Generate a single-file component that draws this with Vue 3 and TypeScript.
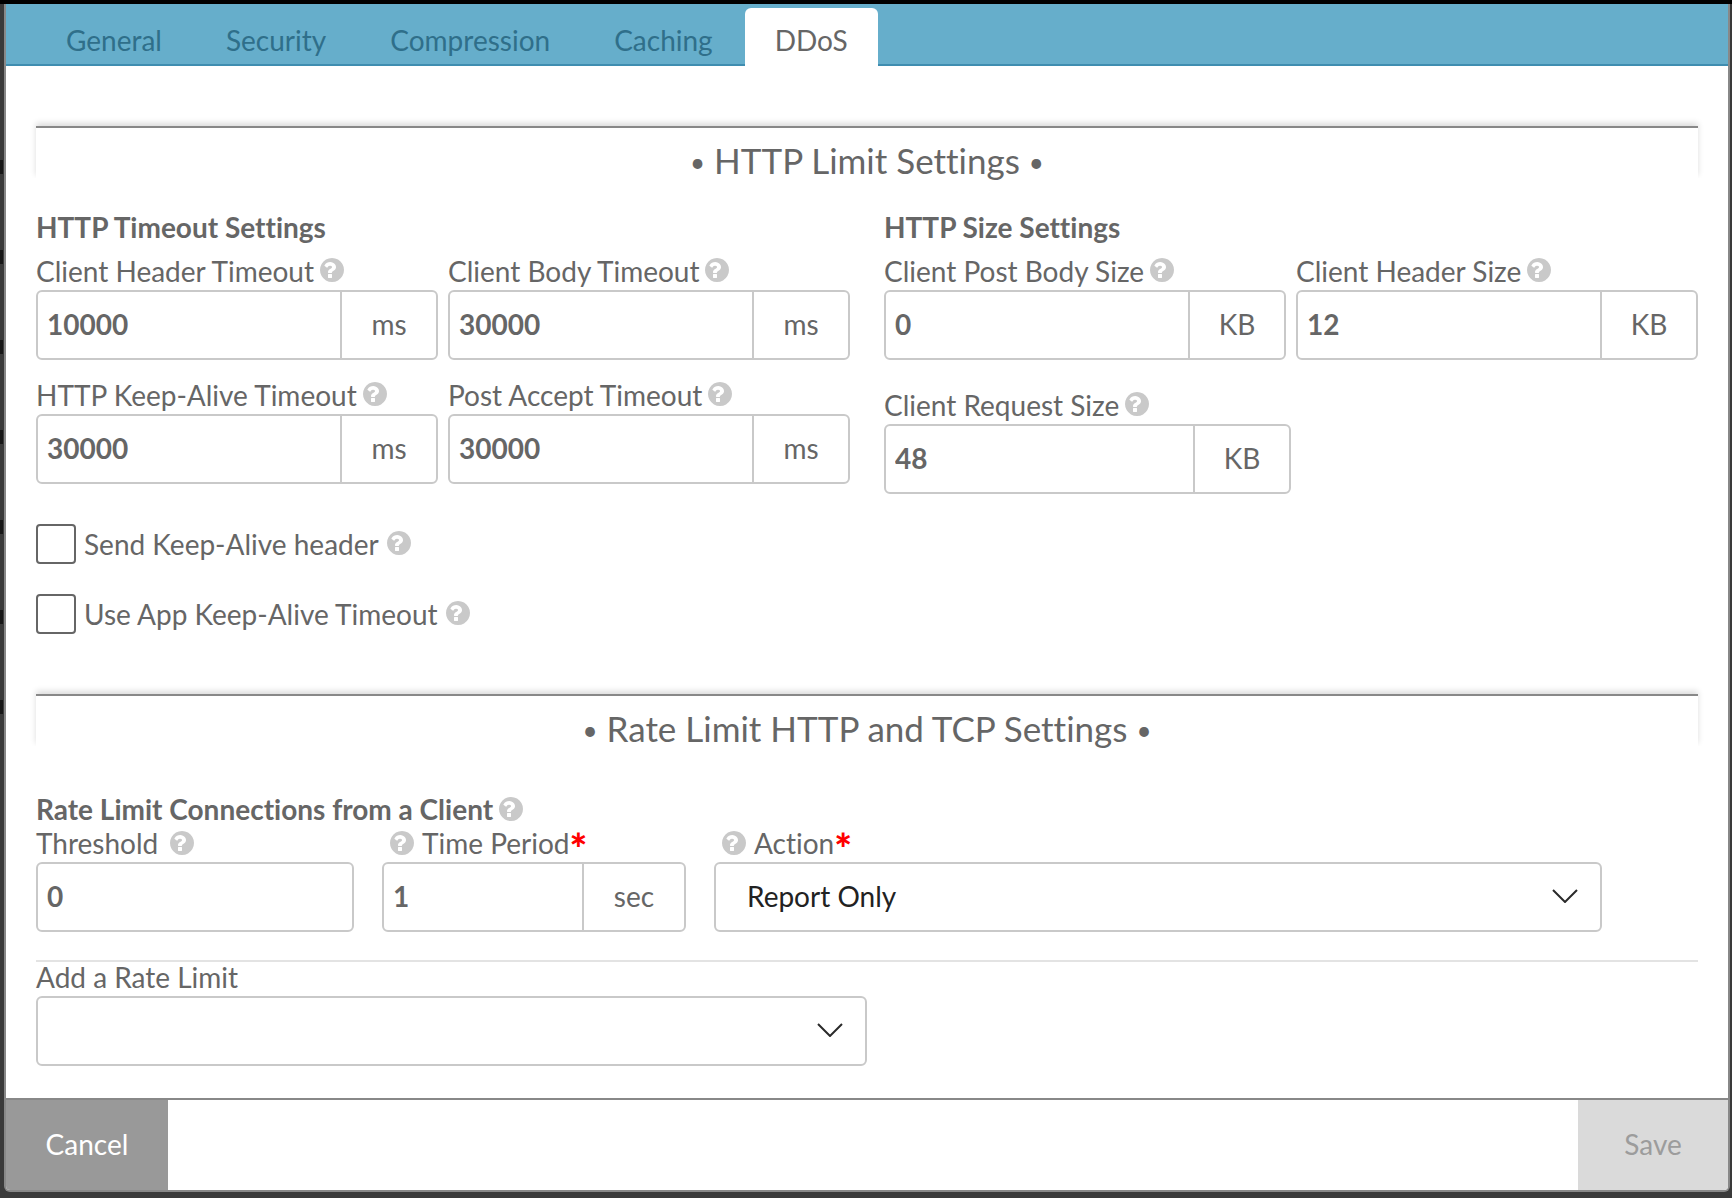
<script setup lang="ts">
import { reactive, ref } from 'vue'

interface Field {
  id: string
  label: string
  unit: string
}

const tabs: string[] = ['General', 'Security', 'Compression', 'Caching', 'DDoS']
const activeTab = ref('DDoS')

const timeoutFields: Field[] = [
  { id: 'client-header-timeout', label: 'Client Header Timeout', unit: 'ms' },
  { id: 'client-body-timeout', label: 'Client Body Timeout', unit: 'ms' },
  { id: 'keep-alive-timeout', label: 'HTTP Keep-Alive Timeout', unit: 'ms' },
  { id: 'post-accept-timeout', label: 'Post Accept Timeout', unit: 'ms' },
]

const sizeFields: Field[] = [
  { id: 'post-body-size', label: 'Client Post Body Size', unit: 'KB' },
  { id: 'client-header-size', label: 'Client Header Size', unit: 'KB' },
]

const values = reactive<Record<string, string>>({
  'client-header-timeout': '10000',
  'client-body-timeout': '30000',
  'keep-alive-timeout': '30000',
  'post-accept-timeout': '30000',
  'post-body-size': '0',
  'client-header-size': '12',
  'client-request-size': '48',
  threshold: '0',
  period: '1',
})

const sendHeader = ref(false)
const useAppTimeout = ref(false)
const action = ref('Report Only')
const newLimit = ref('')
</script>

<template>
  <svg class="sprite" width="0" height="0" aria-hidden="true">
    <symbol id="help" viewBox="128 128 1536 1536">
      <path
        d="M896 1376v-192q0-14-9-23t-23-9h-192q-14 0-23 9t-9 23v192q0 14 9 23t23 9h192q14 0 23-9t9-23zm256-672q0-88-55.5-163t-138.5-116-170-41q-243 0-371 213-15 24 8 42l132 100q7 6 19 6 16 0 25-12 53-68 86-92 34-24 86-24 48 0 85.5 26t37.5 59q0 38-20 61t-68 45q-63 28-115.5 86.5t-52.5 125.5v36q0 14 9 23t23 9h192q14 0 23-9t9-23q0-19 21.5-49.5t54.5-49.5q32-18 49-28.5t46-35 44.5-48 28-60.5 12.5-81zm512 192q0 209-103 385.5t-279.5 279.5-385.5 103-385.5-103-279.5-279.5-103-385.5 103-385.5 279.5-279.5 385.5-103 385.5 103 279.5 279.5 103 385.5z"
      />
    </symbol>
    <symbol id="chevron" viewBox="0 0 26 14">
      <path d="M1 1 13 13 25 1" fill="none" stroke="#2a2a2a" stroke-width="2" />
    </symbol>
  </svg>

  <div class="backdrop">
    <form class="modal" @submit.prevent>
      <nav class="tabs">
        <button
          v-for="tab in tabs"
          :key="tab"
          type="button"
          class="tab"
          :class="{ active: tab === activeTab }"
          @click="activeTab = tab"
        >
          {{ tab }}
        </button>
      </nav>

      <main class="body">
        <section class="limits">
          <h2 class="title">
            <span class="dot">•</span> HTTP Limit Settings <span class="dot">•</span>
          </h2>
          <div class="columns">
            <div>
              <h3 class="heading">HTTP Timeout Settings</h3>
              <div class="pairs">
                <div v-for="f in timeoutFields" :key="f.id">
                  <div class="label-row">
                    <label :for="f.id">{{ f.label }}</label>
                    <button type="button" class="help" :aria-label="'Help: ' + f.label">
                      <svg><use href="#help" /></svg>
                    </button>
                  </div>
                  <div class="box">
                    <input :id="f.id" v-model="values[f.id]" type="text" />
                    <span class="unit">{{ f.unit }}</span>
                  </div>
                </div>
              </div>
            </div>
            <div>
              <h3 class="heading">HTTP Size Settings</h3>
              <div class="pairs">
                <div v-for="f in sizeFields" :key="f.id">
                  <div class="label-row">
                    <label :for="f.id">{{ f.label }}</label>
                    <button type="button" class="help" :aria-label="'Help: ' + f.label">
                      <svg><use href="#help" /></svg>
                    </button>
                  </div>
                  <div class="box">
                    <input :id="f.id" v-model="values[f.id]" type="text" />
                    <span class="unit">{{ f.unit }}</span>
                  </div>
                </div>
              </div>
              <div class="half">
                <div class="label-row">
                  <label for="client-request-size">Client Request Size</label>
                  <button type="button" class="help" aria-label="Help: Client Request Size">
                    <svg><use href="#help" /></svg>
                  </button>
                </div>
                <div class="box">
                  <input id="client-request-size" v-model="values['client-request-size']" type="text" />
                  <span class="unit">KB</span>
                </div>
              </div>
            </div>
          </div>

          <div class="checks">
            <div class="check">
              <input id="send-header" v-model="sendHeader" type="checkbox" />
              <label for="send-header">Send Keep-Alive header</label>
              <button type="button" class="help" aria-label="Help: Send Keep-Alive header">
                <svg><use href="#help" /></svg>
              </button>
            </div>
            <div class="check">
              <input id="use-app-timeout" v-model="useAppTimeout" type="checkbox" />
              <label for="use-app-timeout">Use App Keep-Alive Timeout</label>
              <button type="button" class="help" aria-label="Help: Use App Keep-Alive Timeout">
                <svg><use href="#help" /></svg>
              </button>
            </div>
          </div>
        </section>

        <section class="rates">
          <h2 class="title">
            <span class="dot">•</span> Rate Limit HTTP and TCP Settings <span class="dot">•</span>
          </h2>
          <div class="rate-heading">
            <h3>Rate Limit Connections from a Client</h3>
            <button type="button" class="help" aria-label="Help: Rate Limit Connections">
              <svg><use href="#help" /></svg>
            </button>
          </div>
          <div class="rate-row">
            <div>
              <div class="label-row spaced">
                <label for="threshold">Threshold</label>
                <button type="button" class="help" aria-label="Help: Threshold">
                  <svg><use href="#help" /></svg>
                </button>
              </div>
              <div class="box">
                <input id="threshold" v-model="values.threshold" type="text" />
              </div>
            </div>
            <div>
              <div class="label-row leading">
                <button type="button" class="help" aria-label="Help: Time Period">
                  <svg><use href="#help" /></svg>
                </button>
                <label for="period">Time Period<span class="required">*</span></label>
              </div>
              <div class="box">
                <input id="period" v-model="values.period" type="text" />
                <span class="unit wide">sec</span>
              </div>
            </div>
            <div>
              <div class="label-row leading">
                <button type="button" class="help" aria-label="Help: Action">
                  <svg><use href="#help" /></svg>
                </button>
                <label for="action">Action<span class="required">*</span></label>
              </div>
              <div class="box select">
                <select id="action" v-model="action">
                  <option>Report Only</option>
                </select>
                <svg class="chevron" aria-hidden="true"><use href="#chevron" /></svg>
              </div>
            </div>
          </div>
          <hr class="rule" />
          <div class="add">
            <div class="label-row">
              <label for="new-limit">Add a Rate Limit</label>
            </div>
            <div class="box select">
              <select id="new-limit" v-model="newLimit">
                <option value=""></option>
              </select>
              <svg class="chevron" aria-hidden="true"><use href="#chevron" /></svg>
            </div>
          </div>
        </section>
      </main>

      <footer class="footer">
        <button type="button" class="cancel">Cancel</button>
        <button type="submit" class="save" disabled>Save</button>
      </footer>
    </form>
  </div>
</template>

<style>
body {
  margin: 0;
  background: #3a3a3a;
}
</style>

<style scoped>
* {
  box-sizing: border-box;
}

.sprite {
  position: absolute;
}

.backdrop {
  padding: 0 2px 6px 4px;
  border-top: 4px solid #000;
  font-family: Lato, 'Liberation Sans', sans-serif;
  font-size: 28px;
  font-variant-ligatures: none;
  line-height: 34px;
  color: #666;
  /* edge of the dimmed list behind the dialog */
  background: repeating-linear-gradient(#161616 0 14px, transparent 14px 90px) 0 156px / 3px 560px no-repeat #3a3a3a;
}

button,
input,
select {
  font: inherit;
  font-variant-ligatures: none;
  color: inherit;
  margin: 0;
}

button {
  border: 0;
  padding: 0;
  background: none;
  cursor: pointer;
}

.modal {
  background: #fff;
  border: 2px solid #888;
  border-top: 0;
  border-radius: 0 0 6px 6px;
  overflow: hidden;
}

.tabs {
  display: flex;
  height: 62px;
  padding: 4px 28px 0;
  background: linear-gradient(#3f8db0, #3f8db0) bottom / 100% 2px no-repeat #66aecb;
}

.tab {
  padding: 6px 32px 0;
  border-radius: 6px 6px 0 0;
  color: #2f6f8a;
}

.tab.active {
  padding: 6px 30px 0;
  background: #fff;
  color: #666;
}

.body {
  padding: 60px 30px 32px;
}

.title {
  position: relative;
  margin: 0;
  border-top: 2px solid #888;
  font-size: 35px;
  line-height: 64px;
  font-weight: 400;
  text-align: center;
}

.title::before {
  content: '';
  position: absolute;
  inset: -2px 0 14px;
  box-shadow: 0 -3px 6px rgba(0, 0, 0, 0.14);
  clip-path: inset(-10px -10px 0);
}

.dot {
  font-size: 26px;
  line-height: 26px;
  vertical-align: 2px;
}

.heading {
  margin: 18px 0 10px;
  font-size: inherit;
}

.columns {
  display: grid;
  grid-template-columns: repeat(2, minmax(0, 1fr));
  gap: 34px;
}

.pairs {
  display: grid;
  grid-template-columns: repeat(2, minmax(0, 1fr));
  gap: 18px 10px;
}

.half {
  width: 50%;
  margin-top: 28px;
}

.label-row {
  display: flex;
  align-items: center;
  gap: 6px;
  margin-bottom: 2px;
  white-space: nowrap;
}

.label-row.spaced {
  gap: 12px;
}

.label-row.leading {
  gap: 8px;
  padding-left: 8px;
}

.help {
  flex: none;
  width: 24px;
  height: 24px;
  margin-bottom: 2px;
}

.rates .help {
  margin-bottom: 0;
}

.help svg {
  display: block;
  width: 24px;
  height: 24px;
  fill: #c9c9c9;
}

.box {
  position: relative;
  display: flex;
  height: 70px;
  border: 2px solid #c9c9c9;
  border-radius: 6px;
  background: #fff;
}

.box input {
  flex: 1;
  width: 100%;
  min-width: 0;
  padding: 0 9px 2px;
  border: 0;
  background: none;
  font-weight: 700;
  outline: none;
}

.unit {
  flex: none;
  width: 96px;
  border-left: 2px solid #c9c9c9;
  line-height: 64px;
  text-align: center;
}

.unit.wide {
  width: 102px;
}

.box select {
  flex: 1;
  min-width: 0;
  padding: 0 60px 2px 31px;
  border: 0;
  background: none;
  appearance: none;
  color: #222;
  outline: none;
}

.chevron {
  position: absolute;
  top: 25px;
  right: 22px;
  width: 26px;
  height: 14px;
  pointer-events: none;
}

.checks {
  display: grid;
  gap: 30px;
  margin: 30px 0 60px;
}

.check {
  display: flex;
  align-items: center;
  gap: 8px;
}

.check input {
  appearance: none;
  width: 40px;
  height: 40px;
  border: 2px solid #666;
  border-radius: 4px;
  background: #fff;
}

.check input:checked {
  background: #666;
}

.rate-heading {
  display: flex;
  align-items: center;
  gap: 6px;
  margin-top: 32px;
}

.rate-heading h3 {
  margin: 0;
  font-size: inherit;
}

.rate-row {
  display: grid;
  grid-template-columns: minmax(0, 318fr) minmax(0, 304fr) minmax(0, 888fr) minmax(0, 68fr);
  gap: 28px;
}

.required {
  color: #f00;
  font-size: 42px;
  font-weight: 900;
  line-height: 20px;
  vertical-align: -10px;
}

.rule {
  height: 2px;
  margin: 28px 0 -2px;
  border: 0;
  background: #e3e3e3;
}

.add {
  width: 50%;
}

.footer {
  display: flex;
  justify-content: space-between;
  height: 92px;
  border-top: 2px solid #888;
}

.footer button {
  padding-bottom: 2px;
}

.cancel {
  width: 162px;
  background: #999;
  color: #fff;
}

.save {
  width: 150px;
  background: #dadada;
  color: #9c9c9c;
}
</style>
